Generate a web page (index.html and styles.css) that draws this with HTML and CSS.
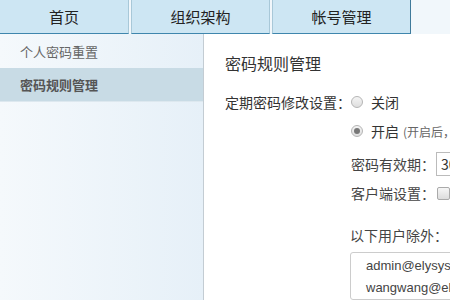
FILE: index.html
```html
<!DOCTYPE html>
<html lang="zh-CN">
<head>
    <meta charset="UTF-8">
    <title>密码规则管理</title>
    <link rel="stylesheet" href="styles.css">
</head>
<body>
    <div class="tabs">
        <div class="tab">首页</div>
        <div class="tab">组织架构</div>
        <div class="tab tab-last">帐号管理</div>
    </div>
    <div class="main">
        <div class="sidebar">
            <div class="side-item">个人密码重置</div>
            <div class="side-item active">密码规则管理</div>
        </div>
        <div class="content">
            <h2 class="title">密码规则管理</h2>
            <div class="row">
                <div class="row-label">定期密码修改设置：</div>
                <div class="row-body">
                    <div class="opt"><span class="radio"></span>关闭</div>
                    <div class="opt"><span class="radio checked"></span>开启 <span class="hint">(开启后，用户密码到期后需要修改密码)</span></div>
                    <div class="sub">
                        <div class="sub-row">
                            <span class="sub-label">密码有效期：</span>
                            <span class="input">30</span>
                        </div>
                        <div class="sub-row">
                            <span class="sub-label">客户端设置：</span>
                            <span class="checkbox"></span>
                        </div>
                    </div>
                    <div class="except-label">以下用户除外：</div>
                    <div class="users">
                        <div>admin@elysys.com</div>
                        <div>wangwang@elysys.com</div>
                    </div>
                </div>
            </div>
        </div>
    </div>
</body>
</html>
```

FILE: styles.css
```css
body {
    margin: 0;
    font-family: "Noto Sans CJK SC", "Liberation Sans", sans-serif;
    font-size: 14px;
    color: #333;
    background-color: #fff;
    overflow: hidden;
    height: 300px;
}
.tabs {
    display: flex;
    height: 34px;
    background-color: #f1f7fb;
}
.tab {
    width: 128px;
    height: 33px;
    line-height: 33px;
    text-align: center;
    background-color: #cde6f3;
    border-bottom: 1px solid #3f86ad;
    border-right: 1px solid #a8c8d8;
    color: #222;
    font-size: 15px;
}
.tab + .tab {
    margin-left: 2px;
    border-left: 1px solid #a8c8d8;
    width: 137px;
}
.tab-last {
    width: 141px;
    border-right: 1px solid #3f7a9a;
}
.main {
    display: flex;
    height: 266px;
}
.sidebar {
    width: 203px;
    border-right: 1px solid #c3ccd3;
    background: linear-gradient(to right, #f5f9fc, #e6f0f8);
}
.side-item {
    height: 34px;
    line-height: 36px;
    padding-left: 20px;
    font-size: 13px;
    color: #666;
}
.side-item.active {
    height: 33px;
    line-height: 33px;
    background-color: #c8dbe5;
    color: #555;
    font-weight: bold;
    border-bottom: 1px solid #dde8ef;
}
.content {
    flex: 1;
    margin-left: 1px;
    padding: 19px 0 0 20px;
    white-space: nowrap;
    overflow: hidden;
}
.title {
    margin: 0 0 19px 0;
    font-size: 16px;
    font-weight: normal;
    line-height: 20px;
    color: #333;
}
.row {
    display: flex;
}
.row-label {
    width: 125px;
    line-height: 20px;
}
.row-body {
    flex: 1;
}
.opt {
    display: flex;
    align-items: center;
    height: 20px;
    margin-bottom: 9px;
}
.radio {
    width: 10px;
    height: 10px;
    border: 1px solid #b5b5b5;
    border-radius: 50%;
    background: linear-gradient(#f4f4f4, #dedede);
    margin: 0 8px 0 1px;
    position: relative;
}
.radio.checked::after {
    content: "";
    position: absolute;
    left: 2px;
    top: 2px;
    width: 6px;
    height: 6px;
    border-radius: 50%;
    background-color: #777;
}
.hint {
    font-size: 12px;
    color: #666;
    margin-left: 4px;
}
.sub {
    padding-top: 2px;
}
.sub-row {
    display: flex;
    align-items: center;
    height: 24px;
    margin-bottom: 5px;
}
.sub-label {
    width: 85px;
    text-align: right;
    color: #444;
}
.input {
    display: inline-block;
    width: 80px;
    height: 22px;
    line-height: 22px;
    border: 1px solid #bbb;
    padding-left: 4px;
    margin-left: 1px;
}
.checkbox {
    width: 11px;
    height: 11px;
    border: 1px solid #aaa;
    border-radius: 2px;
    background: linear-gradient(#f6f6f6, #dcdcdc);
    margin-left: 2px;
}
.except-label {
    margin-top: 20px;
    line-height: 20px;
    color: #444;
}
.users {
    margin-top: 7px;
    width: 200px;
    border: 1px solid #ccc;
    border-radius: 3px;
    padding: 2px 0 0 15px;
    line-height: 22px;
    font-family: "Liberation Sans", sans-serif;
    font-size: 13px;
    color: #444;
}
```
